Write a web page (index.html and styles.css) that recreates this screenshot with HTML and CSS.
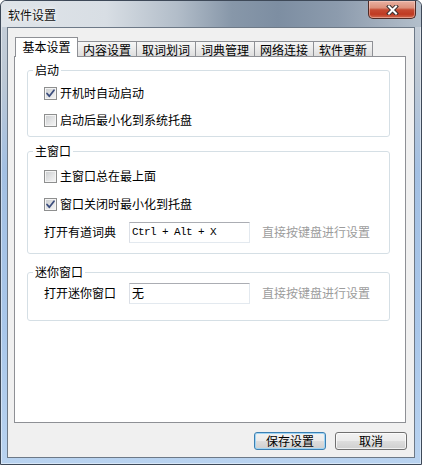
FILE: index.html
```html
<!DOCTYPE html>
<html lang="zh-CN">
<head>
<meta charset="utf-8">
<title>软件设置</title>
<link rel="stylesheet" href="styles.css">
</head>
<body>
<div class="window">
  <div class="titlebar">
    <span class="title">软件设置</span>
    <div class="close-btn">
      <svg width="13" height="10" viewBox="0 0 13 10">
        <path class="x-outline" d="M3 1.5 L10 8.5 M10 1.5 L3 8.5"/>
        <path class="x-fill" d="M3 1.5 L10 8.5 M10 1.5 L3 8.5"/>
      </svg>
    </div>
  </div>
  <div class="client">
    <div class="tabs">
      <div class="tab active">基本设置</div>
      <div class="tab">内容设置</div>
      <div class="tab">取词划词</div>
      <div class="tab">词典管理</div>
      <div class="tab">网络连接</div>
      <div class="tab">软件更新</div>
    </div>
    <div class="panel">
      <fieldset class="group group-startup">
        <legend>启动</legend>
        <div class="row"><span class="cb"><svg width="11" height="11" viewBox="0 0 11 11"><path class="check" d="M2 5.5 L4.3 8.2 L9 2.2"/></svg></span><span>开机时自动启动</span></div>
        <div class="row"><span class="cb"></span><span>启动后最小化到系统托盘</span></div>
      </fieldset>
      <fieldset class="group group-main">
        <legend>主窗口</legend>
        <div class="row"><span class="cb"></span><span>主窗口总在最上面</span></div>
        <div class="row"><span class="cb"><svg width="11" height="11" viewBox="0 0 11 11"><path class="check" d="M2 5.5 L4.3 8.2 L9 2.2"/></svg></span><span>窗口关闭时最小化到托盘</span></div>
        <div class="row field-row"><span class="field-label">打开有道词典</span><span class="input mono">Ctrl + Alt + X</span><span class="hint">直接按键盘进行设置</span></div>
      </fieldset>
      <fieldset class="group group-mini">
        <legend>迷你窗口</legend>
        <div class="row field-row"><span class="field-label">打开迷你窗口</span><span class="input">无</span><span class="hint">直接按键盘进行设置</span></div>
      </fieldset>
    </div>
    <div class="buttons">
      <button class="btn default">保存设置</button>
      <button class="btn">取消</button>
    </div>
  </div>
</div>
</body>
</html>
```

FILE: styles.css
```css
* { box-sizing: border-box; }
html, body { margin: 0; padding: 0; }
body {
  width: 422px;
  height: 465px;
  overflow: hidden;
  background: #ffffff;
  font-family: "Noto Sans CJK SC", "Liberation Sans", sans-serif;
  font-size: 12px;
  line-height: 12px;
  color: #000;
}

.window {
  width: 422px;
  height: 465px;
  border: 1px solid #3e4958;
  border-radius: 6px 6px 0 0;
  background: linear-gradient(to bottom, #c8d0d9 0px, #bcc8d5 80px, #a3c0e3 170px, #a9c7ea 330px, #b9d3f0 465px);
  box-shadow: inset 0 0 0 1px rgba(255,255,255,0.45);
  display: flex;
  flex-direction: column;
  overflow: hidden;
}

.titlebar {
  height: 26px;
  flex: none;
  display: flex;
  justify-content: space-between;
  align-items: flex-start;
  background: linear-gradient(to right, #dfe4e9 0%, #d8dee4 25%, #b2bdc9 42%, #8797a9 55%, #7d8ea2 66%, #8c9bad 80%, #a5b1bf 92%, #b3bfcb 100%);
  border-radius: 5px 5px 0 0;
}
.title {
  margin: 8px 0 0 7px;
  color: #111;
  text-shadow: 0 0 6px rgba(255,255,255,0.95), 0 0 3px rgba(255,255,255,0.9);
}
.close-btn {
  width: 48px;
  height: 18px;
  margin-right: 5px;
  border: 1px solid #4f2b26;
  border-top: none;
  border-radius: 0 0 5px 5px;
  background: linear-gradient(to bottom, #e9b1a2 0%, #dc907b 40%, #c54a32 52%, #bf3a22 78%, #d06a4f 100%);
  box-shadow: inset 0 0 0 1px rgba(255,220,210,0.45);
  display: flex;
  align-items: center;
  justify-content: center;
}
.x-outline { stroke: #3a3030; stroke-width: 4; stroke-linecap: square; fill: none; }
.x-fill { stroke: #ffffff; stroke-width: 2; stroke-linecap: square; fill: none; }

.client {
  flex: 1;
  margin: 0 6px 6px;
  border: 1px solid #6d7987;
  background: #f0f0f0;
  display: flex;
  flex-direction: column;
}

.tabs {
  height: 19px;
  margin-top: 9px;
  padding-left: 7px;
  display: flex;
  align-items: flex-end;
}
.tab {
  width: 60px;
  height: 15px;
  margin-left: -1px;
  border: 1px solid #8e9095;
  border-bottom: none;
  background: linear-gradient(to bottom, #f6f6f6 0%, #ebebeb 50%, #dedede 100%);
  display: flex;
  align-items: center;
  justify-content: center;
  padding-top: 1px;
}
.tab.active {
  width: 63px;
  height: 20px;
  margin-left: 0;
  margin-bottom: -1px;
  background: #ffffff;
  position: relative;
  z-index: 2;
  padding-top: 0;
  padding-bottom: 1px;
}

.panel {
  height: 367px;
  margin: 0 8px 0 6px;
  border: 1px solid #8e9095;
  background: #ffffff;
  padding: 7px 15px 0 12px;
  display: flex;
  flex-direction: column;
}

.group {
  margin: 0;
  padding: 0 10px 0 0;
  border: 1px solid #d5dfe5;
  border-radius: 3px;
  min-width: 0;
  display: flex;
  flex-direction: column;
}
.group legend {
  margin-left: 5px;
  padding: 0 2px;
  line-height: 12px;
  height: 12px;
}
.group-startup { padding-top: 6px; padding-bottom: 5px; gap: 5px; }
.group-main { margin-top: 8px; padding-top: 8px; padding-bottom: 10px; }
.group-main .row + .row { margin-top: 6px; }
.group-main .field-row { margin-top: 5px; }
.group-mini { margin-top: 12px; padding-top: 4px; padding-bottom: 16px; }

.row {
  height: 22px;
  padding-left: 16px;
  display: flex;
  align-items: center;
}
.cb {
  width: 13px;
  height: 13px;
  margin-right: 3px;
  border: 1px solid #8e8f8f;
  background: linear-gradient(135deg, #c9cbcd 0%, #e4e5e6 55%, #f6f6f6 100%);
  box-shadow: inset 0 0 0 1px #f4f4f4;
  display: flex;
  align-items: center;
  justify-content: center;
  flex: none;
}
.check { stroke: #3c4e7e; stroke-width: 1.8; fill: none; stroke-linecap: round; stroke-linejoin: round; }

.field-label { width: 85px; flex: none; }
.input {
  width: 121px;
  height: 21px;
  flex: none;
  border: 1px solid #e3e9ef;
  border-top-color: #abadb3;
  border-left-color: #dbdfe6;
  background: #fff;
  padding: 0 2px 0 2px;
  display: flex;
  align-items: center;
}
.mono {
  font-family: "Liberation Mono", "DejaVu Sans Mono", monospace;
  font-size: 11px;
  letter-spacing: -0.6px;
}
.hint {
  margin-left: 12px;
  color: #9c9c9c;
}

.buttons {
  margin-top: 9px;
  padding-right: 7px;
  display: flex;
  justify-content: flex-end;
  gap: 9px;
}
.btn {
  width: 72px;
  height: 18px;
  padding: 0;
  font-family: "Noto Sans CJK SC", sans-serif;
  font-size: 12px;
  line-height: 12px;
  color: #000;
  border: 1px solid #707070;
  border-radius: 3px;
  background: linear-gradient(to bottom, #f2f2f2 0%, #ebebeb 48%, #dddddd 52%, #cfcfcf 100%);
  box-shadow: inset 0 0 0 1px rgba(255,255,255,0.7);
}
.btn.default {
  border-color: #3c7fb1;
  box-shadow: inset 0 0 0 1px #9fd5f5;
}
```
